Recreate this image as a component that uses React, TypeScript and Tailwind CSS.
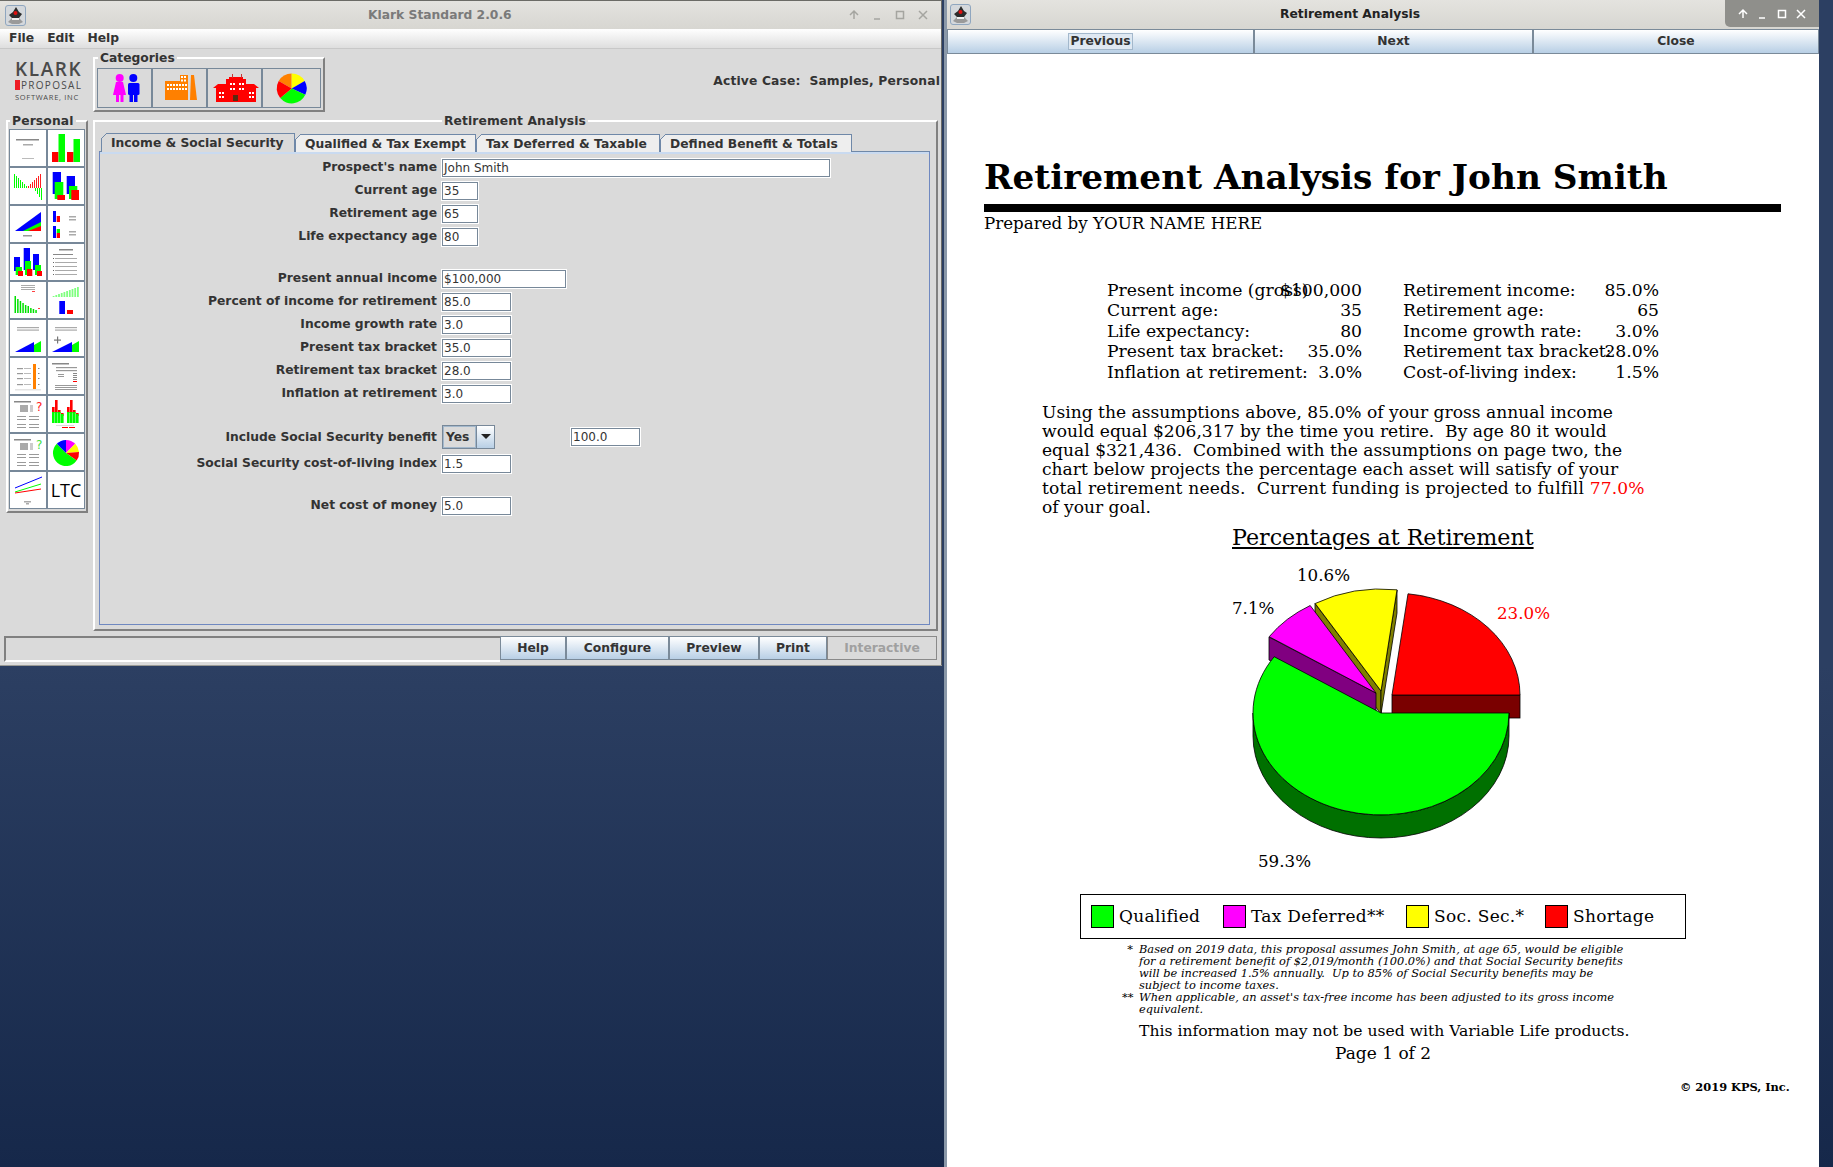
import type { ReactNode } from 'react';

// slice of a circle or squashed ellipse, angles in degrees counter-clockwise from east (a0 < a1)
function pt(cx: number, cy: number, rx: number, ry: number, a: number) {
  const r = (a * Math.PI) / 180;
  return `${(cx + rx * Math.cos(r)).toFixed(1)} ${(cy - ry * Math.sin(r)).toFixed(1)}`;
}

function wedge(cx: number, cy: number, rx: number, ry: number, a0: number, a1: number) {
  const large = a1 - a0 > 180 ? 1 : 0;
  return `M${cx} ${cy}L${pt(cx, cy, rx, ry, a0)}A${rx} ${ry} 0 ${large} 0 ${pt(cx, cy, rx, ry, a1)}Z`;
}

const GRAY = '#9a9a9a';

function Bar({ x, y, w, h, c }: { x: number; y: number; w: number; h: number; c: string }) {
  return <rect x={x} y={y} width={w} height={h} fill={c} />;
}

function Lines({ x, w, ys, c = GRAY, h = 1 }: { x: number; w: number; ys: number[]; c?: string; h?: number }) {
  return (
    <>
      {ys.map((y) => (
        <rect key={y} x={x} y={y} width={w} height={h} fill={c} />
      ))}
    </>
  );
}

function Question({ color }: { color: string }) {
  return (
    <>
      <Bar x={4} y={5} w={17} h={1.5} c="#888" />
      <Bar x={10} y={9} w={8} h={7} c="#aaa" />
      <Bar x={20} y={9} w={3} h={7} c="#ccc" />
      <text x={26} y={15} fontSize="12" fill={color} fontFamily="DejaVu Sans, sans-serif">
        ?
      </text>
      <Lines x={7} w={9} ys={[20, 23, 28, 31]} />
      <Lines x={19} w={10} ys={[20, 23, 28, 31]} />
    </>
  );
}

function Twin({ dx }: { dx: number }) {
  const bars = [
    [0, 11, 15],
    [3, 4, 15],
    [6, 14, 15],
    [9, 17, 18],
  ];
  return (
    <>
      {bars.map(([x, top, g]) => (
        <g key={x}>
          <Bar x={dx + x} y={top} w={2.6} h={g - top + 2} c="#ff0000" />
          <Bar x={dx + x} y={x === 9 ? 18 : 16} w={2.6} h={x === 9 ? 9 : 11} c="#00ff00" />
        </g>
      ))}
    </>
  );
}

const personalIcons: ReactNode[] = [
  <>
    <Bar x={6} y={9} w={23} h={1.5} c="#888" />
    <Bar x={13} y={14} w={10} h={1.5} c="#aaa" />
    <Bar x={12} y={28} w={12} h={1} c="#bbb" />
  </>,
  <>
    <Bar x={4} y={22} w={6.5} h={10} c="#ff0000" />
    <Bar x={10.5} y={4} w={6.5} h={28} c="#00ff00" />
    <Bar x={19} y={22} w={6.5} h={10} c="#ff0000" />
    <Bar x={25.5} y={9} w={6.5} h={23} c="#00ff00" />
  </>,
  <>
    {[0, 1, 2, 3, 4, 5, 6].map((i) => (
      <Bar key={i} x={4 + i * 2} y={6 + i * 2} w={1} h={14 - i * 2} c="#00ff00" />
    ))}
    {[0, 1, 2, 3, 4, 5, 6].map((i) => (
      <Bar key={i} x={18 + i * 2} y={18 - i * 2} w={1} h={2 + i * 2} c="#ff2020" />
    ))}
    {[0, 1, 2, 3].map((i) => (
      <Bar key={i} x={25 + i * 2} y={20} w={1} h={3 + i * 3} c="#00ff00" />
    ))}
  </>,
  <>
    <Bar x={4.7} y={4} w={8.3} h={22} c="#0000ff" />
    <Bar x={6.7} y={14} w={8.6} h={17} c="#00ff00" />
    <Bar x={9.3} y={27} w={7.7} h={5} c="#ff0000" />
    <Bar x={18.7} y={8} w={8.3} h={18} c="#0000ff" />
    <Bar x={21} y={18} w={8.3} h={13} c="#00ff00" />
    <Bar x={23.3} y={22} w={7.7} h={10} c="#ff0000" />
  </>,
  <>
    <polygon points="5,25 31,6 31,25" fill="#0000ff" />
    <polygon points="13,25 31,16 31,25" fill="#00ff00" />
    <polygon points="18,25 31,20 31,25" fill="#ff0000" />
    <Bar x={13} y={29} w={9} h={1.5} c="#999" />
  </>,
  <>
    <Bar x={5} y={5} w={3} h={11} c="#0000ff" />
    <Bar x={8.7} y={10} w={3.3} h={6} c="#ff0000" />
    <Lines x={21} w={7} ys={[10, 13]} h={1.5} c="#aaa" />
    <Bar x={5} y={20} w={3} h={12} c="#0000ff" />
    <Bar x={8.7} y={23} w={3.3} h={4} c="#00ff00" />
    <Bar x={8.7} y={27} w={3.3} h={5} c="#ff0000" />
    <Lines x={21} w={7} ys={[25, 28]} h={1.5} c="#aaa" />
  </>,
  <>
    <Bar x={4} y={13} w={6} h={14} c="#0000ff" />
    <Bar x={13.7} y={4} w={6.3} h={22} c="#0000ff" />
    <Bar x={23} y={10} w={6} h={16} c="#0000ff" />
    <Bar x={5.7} y={23} w={6.3} h={8} c="#00ff00" />
    <Bar x={15} y={17} w={6} h={14} c="#00ff00" />
    <Bar x={25} y={21} w={6} h={10} c="#00ff00" />
    <Bar x={8} y={27} w={5} h={5} c="#ff0000" />
    <Bar x={17} y={25} w={5.3} h={7} c="#ff0000" />
    <Bar x={27} y={27} w={5} h={5} c="#ff0000" />
  </>,
  <>
    <Bar x={11} y={5} w={14} h={1.5} c="#888" />
    <Bar x={5} y={10} w={20} h={1} c="#888" />
    <Lines x={7} w={22} ys={[14, 18, 22, 26, 30]} c="#aaa" />
    <Lines x={5} w={1} ys={[14, 18, 22, 26, 30]} c="#666" />
  </>,
  <>
    <Lines x={11} w={14} ys={[3, 5, 7]} c="#aaa" />
    <Bar x={22} y={9} w={3} h={1} c="#ff4040" />
    {[17, 14, 12, 10, 8, 7, 5, 4, 3].map((h, i) => (
      <Bar key={i} x={4.5 + i * 2.6} y={31 - h} w={1.5} h={h} c="#00e000" />
    ))}
    <Bar x={28} y={26} w={2} h={1} c="#ff4040" />
  </>,
  <>
    {[1, 2, 3, 4, 5, 6, 7, 8, 9, 10].map((i) => (
      <Bar key={i} x={2 + i * 2.7} y={15 - i} w={1.8} h={i} c="#80ff80" />
    ))}
    <Bar x={11.3} y={19} w={5.7} h={13} c="#0000ff" />
    <Bar x={19} y={28} w={6} h={4} c="#ff0000" />
  </>,
  <>
    <Lines x={7} w={22} ys={[7, 9.5]} h={1.2} c="#aaa" />
    <polygon points="5,32 24,22 24,32" fill="#0000ff" />
    <polygon points="24,25 31,21 31,32 24,32" fill="#00ff00" />
  </>,
  <>
    <Lines x={7} w={22} ys={[7, 9.5]} h={1.2} c="#aaa" />
    <Bar x={6} y={19.5} w={7} h={1.2} c="#777" />
    <Bar x={9} y={16.5} w={1.2} h={7} c="#777" />
    <polygon points="4,32 24,22 24,32" fill="#0000ff" />
    <polygon points="24,25 31,21 31,32 24,32" fill="#00ff00" />
  </>,
  <>
    <Bar x={23} y={6} w={3} h={25} c="#ff8000" />
    <Lines x={7} w={6} ys={[10, 15, 20, 26]} h={1.2} c="#999" />
    <Lines x={14} w={7} ys={[10, 15, 20, 26]} h={1} c="#bbb" />
    <Lines x={28} w={1.5} ys={[10, 15, 20, 26]} c="#888" />
    <Bar x={5} y={31} w={26} h={1.5} c="#e4e4e4" />
  </>,
  <>
    <Bar x={4} y={5} w={17} h={1.5} c="#888" />
    <Lines x={8} w={21} ys={[9, 12]} h={1.2} c="#999" />
    <Lines x={10} w={6} ys={[16, 18]} c="#999" />
    <Lines x={25} w={4} ys={[15, 17, 19, 21]} c="#888" />
    <Bar x={25} y={23} w={4} h={1} c="#ff0000" />
    <Lines x={7} w={22} ys={[27, 29, 31]} c="#999" />
  </>,
  <Question color="#ff2020" />,
  <>
    <Twin dx={4} />
    <Twin dx={19} />
    <Bar x={8} y={29} w={18} h={1} c="#ddd" />
    <Bar x={14} y={31} w={6} h={1} c="#ff0000" />
    <Bar x={21} y={31} w={6} h={1} c="#ff0000" />
  </>,
  <Question color="#40e040" />,
  <>
    <path d={wedge(18, 19, 13, 13, 45, 90)} fill="#ff00ff" />
    <path d={wedge(18, 19, 13, 13, 5, 45)} fill="#ffff00" />
    <path d={wedge(18, 19, 13, 13, -35, 5)} fill="#ff0000" />
    <path d={wedge(18, 19, 13, 13, -225, -35)} fill="#00ff00" />
    <path d={wedge(18, 19, 13, 13, 90, 135)} fill="#0000ff" />
  </>,
  <>
    <line x1="5" y1="16" x2="32" y2="5" stroke="#0000ff" />
    <line x1="5" y1="20" x2="31" y2="12" stroke="#00ff00" />
    <line x1="5" y1="21" x2="31" y2="17" stroke="#ff0000" />
    <Bar x={14} y={29} w={7} h={1.5} c="#aaa" />
    <Bar x={16} y={31} w={3} h={1.5} c="#aaa" />
  </>,
];

function TitleIcon() {
  return (
    <div className="flex h-[21px] w-[21px] items-center justify-center rounded-[3px] border border-[#8fa6bf] bg-[#d4d8dc]">
      <svg width="19" height="19" viewBox="0 0 19 19">
        <polygon points="10,1 13,6 16,8 13,12 6,12 3,9 7,6" fill="#2c2c2c" />
        <polygon points="2,16 6,12 13,12 17,16 13,18 6,18" fill="#9a9a9a" />
        <circle cx="9.5" cy="7" r="2" fill="#e01010" />
        <rect x="6" y="12" width="7" height="2" fill="#f0f0f0" />
      </svg>
    </div>
  );
}

function WindowControls() {
  return (
    <>
      <svg width="12" height="14" viewBox="0 0 12 14" fill="none" stroke="currentColor" strokeWidth="1.5">
        <path d="M2 7l4-4 4 4M6 3v8" />
      </svg>
      <svg width="12" height="14" viewBox="0 0 12 14" fill="none" stroke="currentColor" strokeWidth="1.5">
        <path d="M3 11h6" />
      </svg>
      <svg width="12" height="14" viewBox="0 0 12 14" fill="none" stroke="currentColor" strokeWidth="1.5">
        <rect x="2.5" y="3.5" width="7" height="7" />
      </svg>
      <svg width="12" height="14" viewBox="0 0 12 14" fill="none" stroke="currentColor" strokeWidth="1.5">
        <path d="M2 3l8 8M10 3l-8 8" />
      </svg>
    </>
  );
}

function Etched({ title, className, titleClass, children }: { title: string; className: string; titleClass: string; children?: ReactNode }) {
  return (
    <div className={`relative border-2 border-t-white border-l-white border-r-[#808080] border-b-[#808080] ${className}`}>
      <span className={`absolute top-[-9px] bg-[#dadada] px-[2px] text-[12.3px] leading-[16px] font-bold whitespace-nowrap text-[#333] ${titleClass}`}>{title}</span>
      {children}
    </div>
  );
}

function OceanButton({ children, className = '', focused = false }: { children: ReactNode; className?: string; focused?: boolean }) {
  return (
    <div className={`flex items-center justify-center border border-[#7a8a99] bg-gradient-to-b from-white to-[#b8cfe5] font-['DejaVu_Sans',sans-serif] text-[12.3px] font-bold text-[#333] ${className}`}>
      {focused ? <span className="border border-[#a3b8cc] bg-[#dfe8f2] px-[1px] leading-[15px]">{children}</span> : children}
    </div>
  );
}

function Tab({ label, width, active = false }: { label: string; width: string; active?: boolean }) {
  return (
    <div className={`relative flex items-center border-t border-r border-l border-[#6f88a8] text-[12.3px] font-bold text-[#333] ${width} ${active ? 'z-10 h-[19px] bg-[#dadada]' : 'h-[18px] bg-[#eeeeee]'}`}>
      <svg className="absolute -top-px -left-px" width="6" height="6" viewBox="0 0 6 6">
        <polygon points="0,0 6,0 0,6" fill="#dadada" />
        <line x1="0" y1="6" x2="6" y2="0" stroke="#6f88a8" />
      </svg>
      <span className="pt-[1px] pl-[9px] whitespace-nowrap">{label}</span>
    </div>
  );
}

function Input({ value, width }: { value: string; width: string }) {
  return <div className={`h-[18px] border border-[#778899] bg-white pl-[1px] text-[12px] leading-[16px] font-normal text-[#333] ring-1 ring-white ${width}`}>{value}</div>;
}

function Row({ label, children, className = '' }: { label: string; children: ReactNode; className?: string }) {
  return (
    <div className={`flex h-[23px] items-center ${className}`}>
      <div className="w-[342px] pr-[5px] text-right text-[12.3px] font-bold whitespace-nowrap text-[#333]">{label}</div>
      {children}
    </div>
  );
}

function Analysis() {
  return (
    <div className="flex h-[474px] flex-col border border-[#6f88c0] border-t-[#6f88a8] bg-[#dadada]">
      <div className="h-[2px] bg-[#c9daf0]" />
      <div className="flex flex-col pt-[2px]">
        <Row label="Prospect's name">
          <Input value="John Smith" width="w-[388px]" />
        </Row>
        <Row label="Current age">
          <Input value="35" width="w-[36px]" />
        </Row>
        <Row label="Retirement age">
          <Input value="65" width="w-[36px]" />
        </Row>
        <Row label="Life expectancy age">
          <Input value="80" width="w-[36px]" />
        </Row>
        <Row label="Present annual income" className="mt-[19px]">
          <Input value="$100,000" width="w-[124px]" />
        </Row>
        <Row label="Percent of income for retirement">
          <Input value="85.0" width="w-[69px]" />
        </Row>
        <Row label="Income growth rate">
          <Input value="3.0" width="w-[69px]" />
        </Row>
        <Row label="Present tax bracket">
          <Input value="35.0" width="w-[69px]" />
        </Row>
        <Row label="Retirement tax bracket">
          <Input value="28.0" width="w-[69px]" />
        </Row>
        <Row label="Inflation at retirement">
          <Input value="3.0" width="w-[69px]" />
        </Row>
        <Row label="Include Social Security benefit" className="mt-[20px] !h-[24px]">
          <div className="flex h-[24px] w-[53px] border border-[#778899]">
            <div className="flex w-[33px] items-center border border-[#a3b8cc] pl-[2px] text-[12.3px] font-bold text-[#333]">Yes</div>
            <div className="flex flex-1 items-center justify-center border-l border-[#778899] bg-gradient-to-b from-white to-[#b8cfe5]">
              <svg width="10" height="6" viewBox="0 0 10 6">
                <polygon points="0,0 10,0 5,5" fill="#222" />
              </svg>
            </div>
          </div>
          <div className="ml-[76px]">
            <Input value="100.0" width="w-[69px]" />
          </div>
        </Row>
        <Row label="Social Security cost-of-living index" className="mt-[3px]">
          <Input value="1.5" width="w-[69px]" />
        </Row>
        <Row label="Net cost of money" className="mt-[19px]">
          <Input value="5.0" width="w-[69px]" />
        </Row>
      </div>
    </div>
  );
}

function LeftWindow() {
  return (
    <div className="absolute top-0 left-0 flex h-[665px] w-[942px] flex-col border-t border-r border-[#6b6b66] bg-[#dadada] font-['DejaVu_Sans',sans-serif] shadow-[0_1px_0_#9a9a95]">
      <div className="relative flex h-[28px] items-center bg-gradient-to-b from-[#e4e3df] to-[#d7d6d1] pl-[5px]">
        <TitleIcon />
        <div className="absolute top-[5px] left-[368px] text-[12.3px] font-bold text-[#7a7a7a]">Klark Standard 2.0.6</div>
        <div className="absolute top-[7px] right-[12px] flex items-center gap-[11px] text-[#a5a5a0]">
          <WindowControls />
        </div>
      </div>
      <div className="flex h-[20px] items-center gap-[13px] border-b border-[#c8c8c8] bg-gradient-to-b from-white to-[#dedede] pl-[9px] text-[12.3px] font-bold text-[#333]">
        <span>File</span>
        <span>Edit</span>
        <span>Help</span>
      </div>
      <div className="flex h-[71px] items-start">
        <div className="ml-[15px] w-[68px] pt-[11px] text-[#4a4a4a]">
          <div className="font-['Open_Sans',sans-serif] text-[19px] leading-[19px] font-semibold tracking-[1.6px]">KLARK</div>
          <div className="flex items-center font-['Open_Sans',sans-serif] text-[10px] leading-[12px] tracking-[1.3px]">
            <span className="mr-[1px] h-[10px] w-[5px] bg-[#ee1c25]" />
            PROPOSAL
          </div>
          <div className="mt-[1px] font-['Open_Sans',sans-serif] text-[7.5px] leading-[10px] tracking-[.7px] whitespace-nowrap">SOFTWARE, INC</div>
        </div>
        <Etched title="Categories" className="mt-[8px] ml-[10px] h-[55px] w-[232px]" titleClass="left-[3px]">
          <div className="mt-[9px] ml-[2px] flex w-[224px] border border-[#778899]">
            <div className="h-[38px] w-[55px] border-r-2 border-[#778899]">
              <svg width="55" height="38" viewBox="0 0 55 38">
                <circle cx="21.7" cy="9" r="4" fill="#ff00ff" />
                <polygon points="18,13 25,13 28,26 15,26" fill="#ff00ff" />
                <rect x="18" y="26" width="3" height="7" fill="#ff00ff" />
                <rect x="22.5" y="26" width="3" height="7" fill="#ff00ff" />
                <circle cx="35.3" cy="9" r="4" fill="#0000ff" />
                <rect x="30" y="14" width="11.5" height="12" rx="1.5" fill="#0000ff" />
                <rect x="31.5" y="26" width="3.5" height="7" fill="#0000ff" />
                <rect x="36" y="26" width="3.5" height="7" fill="#0000ff" />
              </svg>
            </div>
            <div className="h-[38px] w-[55px] border-r-2 border-[#778899]">
              <svg width="55" height="38" viewBox="0 0 55 38">
                <rect x="12" y="12" width="23" height="19" fill="#ff8000" />
                <rect x="27" y="6" width="8" height="7" fill="#ff8000" />
                <polygon points="38,6 41,6 44,31 37,31" fill="#ff8000" />
                {[14, 17, 20, 23, 26, 29, 32].map((x) => (
                  <g key={x} fill="#fff">
                    <rect x={x} y="15" width="2" height="2" />
                    <rect x={x} y="19" width="2" height="2" />
                  </g>
                ))}
                {[28, 31].map((x) => (
                  <g key={x} fill="#fff">
                    <rect x={x} y="7" width="2" height="2" />
                    <rect x={x} y="10.5" width="2" height="2" />
                  </g>
                ))}
              </svg>
            </div>
            <div className="h-[38px] w-[55px] border-r-2 border-[#778899]">
              <svg width="55" height="38" viewBox="0 0 55 38">
                <rect x="8" y="18" width="40" height="15" fill="#ff0000" />
                <polygon points="5,19 10,15 46,15 51,19" fill="#ff0000" />
                <rect x="18" y="10" width="20" height="23" fill="#ff0000" />
                <rect x="21" y="8" width="14" height="3" fill="#ff0000" />
                <rect x="24" y="5" width="1" height="4" fill="#cc3333" />
                <rect x="33" y="5" width="1" height="4" fill="#cc3333" />
                <rect x="25" y="26" width="5" height="6" fill="#5a2a10" />
                {[22, 31].map((x) => (
                  <g key={x} fill="#fff">
                    <rect x={x} y="14" width="2" height="2" />
                    <rect x={x + 3} y="14" width="2" height="2" />
                    <rect x={x} y="19" width="2" height="2" />
                    <rect x={x + 3} y="19" width="2" height="2" />
                  </g>
                ))}
                {[11, 41].map((x) => (
                  <g key={x} fill="#fff">
                    <rect x={x} y="23" width="2" height="2" />
                    <rect x={x + 3} y="23" width="2" height="2" />
                    <rect x={x} y="27" width="2" height="2" />
                    <rect x={x + 3} y="27" width="2" height="2" />
                  </g>
                ))}
              </svg>
            </div>
            <div className="h-[38px] flex-1">
              <svg width="55" height="38" viewBox="0 0 55 38">
                <path d={wedge(28.7, 19.5, 15, 15, 90, 150)} fill="#ff8000" />
                <path d={wedge(28.7, 19.5, 15, 15, 30, 90)} fill="#ffff00" />
                <path d={wedge(28.7, 19.5, 15, 15, -25, 30)} fill="#0000ff" />
                <path d={wedge(28.7, 19.5, 15, 15, -140, -25)} fill="#00ff00" />
                <path d={wedge(28.7, 19.5, 15, 15, -210, -140)} fill="#ff0000" />
              </svg>
            </div>
          </div>
        </Etched>
        <div className="ml-auto pt-[24px] pr-[1px] text-[12.3px] leading-[16px] font-bold tracking-[.15px] whitespace-pre text-[#333]">Active Case:  Samples, Personal</div>
      </div>
      <div className="flex flex-1 items-start">
        <Etched title="Personal" className="ml-[6px] h-[393px] w-[82px]" titleClass="left-[2px] tracking-[.15px]">
          <div className="mt-[7px] ml-[1px] grid w-[76px] grid-cols-2 gap-[2px] bg-[#778899] p-px">
            {personalIcons.map((icon, i) => (
              <div key={i} className="h-[36px] bg-white">
                <svg width="37" height="36" viewBox="0 0 37 36">
                  {icon}
                </svg>
              </div>
            ))}
            <div className="flex h-[36px] items-center justify-center bg-white font-['Open_Sans',sans-serif] text-[18px] text-black">LTC</div>
          </div>
        </Etched>
        <Etched title="Retirement Analysis" className="ml-[5px] h-[511px] w-[845px]" titleClass="left-[347px] tracking-[.1px]">
          <div className="mt-[11px] ml-[4px] flex w-[831px] flex-col">
            <div className="flex items-end pl-[2px]">
              <Tab label="Income & Social Security" width="w-[194px]" active />
              <Tab label="Qualified & Tax Exempt" width="w-[181px]" />
              <Tab label="Tax Deferred & Taxable" width="w-[184px]" />
              <Tab label="Defined Benefit & Totals" width="w-[192px]" />
            </div>
            <div className="-mt-px">
              <Analysis />
            </div>
          </div>
        </Etched>
      </div>
      <div className="flex h-[29px] items-start px-[4px] pb-[3px]">
        <div className="h-[26px] w-[496px] border-t-2 border-b-2 border-l-2 border-[#808080] border-b-white" />
        <OceanButton className="h-[24px] w-[66px]">Help</OceanButton>
        <OceanButton className="h-[24px] w-[103px]">Configure</OceanButton>
        <OceanButton className="h-[24px] w-[90px]">Preview</OceanButton>
        <OceanButton className="h-[24px] w-[68px]">Print</OceanButton>
        <div className="flex h-[24px] w-[110px] items-center justify-center border border-[#8a8a8a] text-[12.3px] font-bold text-[#a0a0a0]">Interactive</div>
      </div>
    </div>
  );
}

function StatRow({ label, value }: { label: string; value: string }) {
  return (
    <div className="grid h-[20.4px] items-center">
      <span className="col-start-1 row-start-1 whitespace-nowrap">{label}</span>
      <span className="col-start-1 row-start-1 justify-self-end">{value}</span>
    </div>
  );
}

function PieChart() {
  const cx = 1381;
  const green = `M${cx} 714L${pt(cx, 714, 128, 102, 146.52)}A128 102 0 1 0 1509 714Z`;
  const side = `M1253 714A128 102 0 0 0 1509 714L1509 737A128 102 0 0 1 1253 737Z`;
  return (
    <svg width="340" height="320" viewBox="1220 560 340 320" className="block font-['DejaVu_Serif',serif]">
      <g stroke="#000" strokeWidth="0.8">
        <rect x="1392" y="696" width="128" height="23" fill="#7a0000" />
        <path d={wedge(1392, 696, 128, 102, 0, 82.8)} fill="#ff0000" />
        <polygon points="1315,604.5 1381,692 1381,715 1315,627.5" fill="#808000" />
        <polygon points="1381,692 1397,591 1397,614 1381,715" fill="#808000" />
        <path d={wedge(1381, 692, 128, 102, 82.8, 120.96)} fill="#ffff00" />
        <polygon points="1269,638 1376,694 1376,717 1269,661" fill="#800080" />
        <path d={wedge(1376, 694, 128, 102, 120.96, 146.52)} fill="#ff00ff" />
        <path d={side} fill="#007000" />
        <path d={green} fill="#00ff00" />
      </g>
      <g fontSize="16.7" fill="#000">
        <text x="1297" y="582">10.6%</text>
        <text x="1232" y="615">7.1%</text>
        <text x="1497" y="620" fill="#ff0000">
          23.0%
        </text>
        <text x="1258" y="868">59.3%</text>
      </g>
    </svg>
  );
}

function Legend({ color, label, width }: { color: string; label: string; width: string }) {
  return (
    <div className={`flex items-center ${width}`}>
      <span className="mr-[5px] h-[23px] w-[23px] border border-black" style={{ backgroundColor: color }} />
      <span className="tracking-[.3px] whitespace-nowrap">{label}</span>
    </div>
  );
}

function RightWindow() {
  return (
    <div className="absolute top-0 left-[944px] flex h-[1167px] w-[875px] flex-col border-l-[3px] border-[#8a98a8] bg-white font-['DejaVu_Serif',serif] text-black">
      <div className="relative flex h-[29px] items-center justify-center bg-gradient-to-b from-[#e4e3df] to-[#d7d6d1] pr-[66px] font-['DejaVu_Sans',sans-serif]">
        <div className="absolute top-[4px] left-[3px]">
          <TitleIcon />
        </div>
        <div className="text-[12.3px] font-bold text-[#222]">Retirement Analysis</div>
        <div className="absolute top-0 right-0 flex h-[27px] w-[94px] items-center justify-around rounded-bl-[5px] bg-[#8f8f8b] px-[8px] text-white">
          <WindowControls />
        </div>
      </div>
      <div className="flex h-[25px]">
        <OceanButton className="w-[307px]" focused>
          Previous
        </OceanButton>
        <OceanButton className="w-[279px]">Next</OceanButton>
        <OceanButton className="flex-1">Close</OceanButton>
      </div>
      <div className="flex flex-1 flex-col pl-[37px]">
        <h1 className="mt-[101px] text-[34.3px] leading-[44px] font-bold whitespace-nowrap">Retirement Analysis for John Smith</h1>
        <div className="mt-[5px] h-[8px] w-[797px] bg-black" />
        <div className="mt-[1px] text-[16.7px] leading-[20px]">Prepared by YOUR NAME HERE</div>
        <div className="mt-[45px] ml-[123px] grid w-[552px] grid-cols-[255px_256px] gap-x-[41px] text-[17.2px]">
          <div>
            <StatRow label="Present income (gross)" value="$100,000" />
            <StatRow label="Current age:" value="35" />
            <StatRow label="Life expectancy:" value="80" />
            <StatRow label="Present tax bracket:" value="35.0%" />
            <StatRow label="Inflation at retirement:" value="3.0%" />
          </div>
          <div>
            <StatRow label="Retirement income:" value="85.0%" />
            <StatRow label="Retirement age:" value="65" />
            <StatRow label="Income growth rate:" value="3.0%" />
            <StatRow label="Retirement tax bracket:" value="28.0%" />
            <StatRow label="Cost-of-living index:" value="1.5%" />
          </div>
        </div>
        <div className="mt-[23px] ml-[58px] text-[17.1px] leading-[19px] whitespace-pre">
          <div>Using the assumptions above, 85.0% of your gross annual income</div>
          <div>would equal $206,317 by the time you retire.  By age 80 it would</div>
          <div>equal $321,436.  Combined with the assumptions on page two, the</div>
          <div>chart below projects the percentage each asset will satisfy of your</div>
          <div className="tracking-[.15px]">
            total retirement needs.  Current funding is projected to fulfill <span className="text-[#ff0000]">77.0%</span>
          </div>
          <div>of your goal.</div>
        </div>
        <div className="mt-[8px] ml-[248px] text-[22.2px] leading-[24px] whitespace-nowrap underline">Percentages at Retirement</div>
        <div className="mt-[10px] ml-[236px]">
          <PieChart />
        </div>
        <div className="mt-[15px] ml-[96px] flex h-[45px] w-[606px] items-center border border-black pl-[10px] text-[17px]">
          <Legend color="#00ff00" label="Qualified" width="w-[132px]" />
          <Legend color="#ff00ff" label="Tax Deferred**" width="w-[183px]" />
          <Legend color="#ffff00" label="Soc. Sec.*" width="w-[139px]" />
          <Legend color="#ff0000" label="Shortage" width="w-[120px]" />
        </div>
        <div className="mt-[4px] ml-[138px] text-[11.4px] leading-[12px] whitespace-pre italic">
          <div className="flex">
            <span className="w-[11px] text-right">*</span>
            <div className="ml-[6px]">
              <div>Based on 2019 data, this proposal assumes John Smith, at age 65, would be eligible</div>
              <div>for a retirement benefit of $2,019/month (100.0%) and that Social Security benefits</div>
              <div>will be increased 1.5% annually.  Up to 85% of Social Security benefits may be</div>
              <div>subject to income taxes.</div>
            </div>
          </div>
          <div className="flex">
            <span className="w-[11px] text-right">**</span>
            <div className="ml-[6px]">
              <div>When applicable, an asset's tax-free income has been adjusted to its gross income</div>
              <div>equivalent.</div>
            </div>
          </div>
        </div>
        <div className="mt-[6px] ml-[155px] text-[15.6px] leading-[20px] whitespace-nowrap">This information may not be used with Variable Life products.</div>
        <div className="mt-[2px] ml-[351px] text-[17px] leading-[20px]">Page 1 of 2</div>
        <div className="mt-[17px] ml-[696px] text-[11.4px] leading-[14px] font-bold whitespace-nowrap">© 2019 KPS, Inc.</div>
      </div>
    </div>
  );
}

export default function App() {
  return (
    <div className="relative h-[1167px] w-[1833px] overflow-hidden bg-gradient-to-b from-[#2c3f62] from-[57%] to-[#16284a]">
      <LeftWindow />
      <RightWindow />
    </div>
  );
}
